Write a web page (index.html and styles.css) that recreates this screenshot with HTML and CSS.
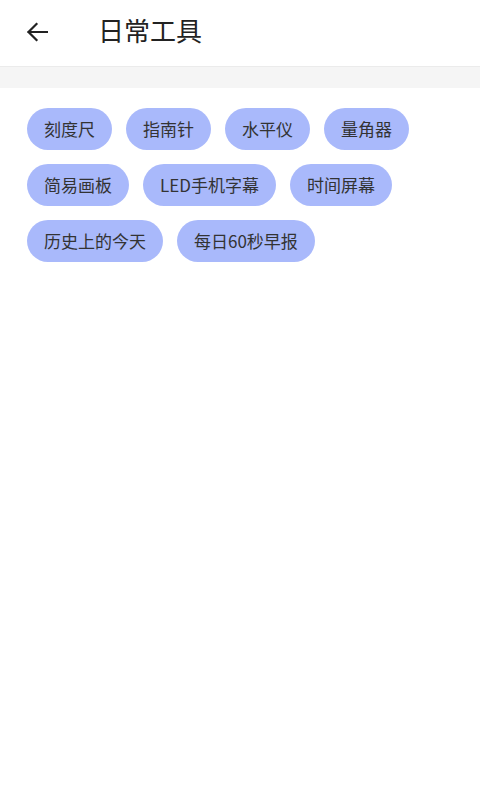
FILE: index.html
```html
<!DOCTYPE html>
<html lang="zh">
<head>
<meta charset="utf-8">
<link rel="stylesheet" href="styles.css">
</head>
<body>
<header class="topbar">
  <span class="back">
    <svg viewBox="0 0 22 20" width="22" height="20"><path d="M21 10H2.5M10.5 2L2.5 10L10.5 18" fill="none" stroke="#222" stroke-width="2.2" stroke-linecap="square"/></svg>
  </span>
  <h1 class="title">日常工具</h1>
</header>
<div class="band"></div>
<main class="chips">
  <span class="chip">刻度尺</span>
  <span class="chip">指南针</span>
  <span class="chip">水平仪</span>
  <span class="chip">量角器</span>
  <span class="chip">简易画板</span>
  <span class="chip">LED手机字幕</span>
  <span class="chip">时间屏幕</span>
  <span class="chip">历史上的今天</span>
  <span class="chip">每日60秒早报</span>
</main>
</body>
</html>
```
FILE: styles.css
```css
html, body { margin: 0; padding: 0; background: #fff; }
body { font-family: "Noto Sans CJK SC", "Noto Sans", sans-serif; color: #333; width: 480px; }
.topbar { height: 66px; box-sizing: border-box; padding-bottom: 6px; display: flex; align-items: center; }
.back { width: 22px; height: 20px; margin-left: 26px; margin-top: 4px; display: flex; }
.title { margin: 0 0 0 50px; font-size: 26px; font-weight: 400; color: #222; line-height: 1; }
.band { height: 21px; background: #f5f5f5; border-top: 1px solid #ebebeb; }
.chips { display: flex; flex-wrap: wrap; gap: 14px 14px; padding: 20px 27px; width: 426px; }
.chip { height: 42px; border-radius: 21px; background: #a9b9fb; padding: 0 17px; font-size: 17px; line-height: 42px; color: #333; white-space: nowrap; }
```
